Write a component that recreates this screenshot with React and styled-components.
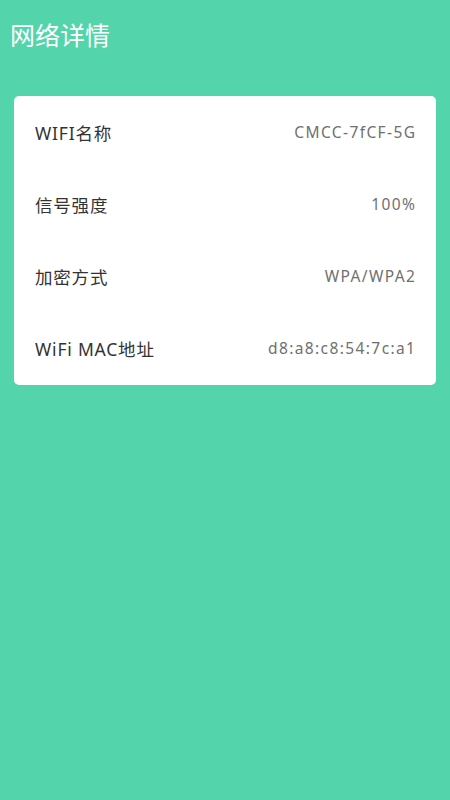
import styled, { createGlobalStyle } from "styled-components";

const GlobalStyle = createGlobalStyle`
  html, body {
    margin: 0;
    padding: 0;
    background-color: #53d4ab;
  }
  body {
    font-family: "Noto Sans", "Noto Sans CJK SC", sans-serif;
  }
`;

const Page = styled.div`
  width: 450px;
  min-height: 800px;
  background-color: #53d4ab;
`;

const Header = styled.div`
  height: 68px;
  display: flex;
  align-items: center;
  padding-left: 10px;
`;

const Title = styled.h1`
  margin: 0;
  color: #ffffff;
  font-size: 25px;
  font-weight: normal;
  font-family: "Noto Sans CJK SC", sans-serif;
`;

const Card = styled.div`
  margin: 28px 14px 0 14px;
  background-color: #ffffff;
  border-radius: 5px;
  padding-bottom: 1px;
`;

const Row = styled.div`
  height: 72px;
  padding: 0 21px;
  display: flex;
  align-items: center;
  justify-content: space-between;
`;

const Label = styled.span`
  font-size: 17.5px;
  letter-spacing: 0.8px;
  color: #333333;
  font-family: "Noto Sans", "Noto Sans CJK SC", sans-serif;
`;

const Value = styled.span`
  font-size: 15.5px;
  letter-spacing: 1.4px;
  margin-right: -1.4px;
  color: #707070;
  font-family: "Noto Sans", "Noto Sans CJK SC", sans-serif;
`;

const rows = [
  { label: "WIFI名称", value: "CMCC-7fCF-5G" },
  { label: "信号强度", value: "100%" },
  { label: "加密方式", value: "WPA/WPA2" },
  { label: "WiFi MAC地址", value: "d8:a8:c8:54:7c:a1" },
];

export default function App() {
  return (
    <Page>
      <GlobalStyle />
      <Header>
        <Title>网络详情</Title>
      </Header>
      <Card>
        {rows.map((row) => (
          <Row key={row.label}>
            <Label>{row.label}</Label>
            <Value>{row.value}</Value>
          </Row>
        ))}
      </Card>
    </Page>
  );
}
